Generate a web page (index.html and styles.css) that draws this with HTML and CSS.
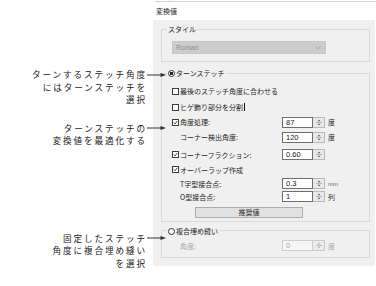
FILE: index.html
```html
<!DOCTYPE html>
<html lang="ja">
<head>
<meta charset="utf-8">
<title>変換値</title>
<link rel="stylesheet" href="styles.css">
</head>
<body>
<div class="page">
  <div class="notes">
    <div class="note">
      <p class="note-text">ターンするステッチ角度<br>にはターンステッチを<br>選択</p>
      <svg class="arrow" viewBox="0 0 19 6"><line x1="0" y1="3" x2="15" y2="3"/><polygon points="13.5,1 19,3 13.5,5"/></svg>
    </div>
    <div class="note note-2">
      <p class="note-text">ターンステッチの<br>変換値を最適化する</p>
      <svg class="arrow" viewBox="0 0 19 6"><line x1="0" y1="3" x2="15" y2="3"/><polygon points="13.5,1 19,3 13.5,5"/></svg>
    </div>
    <div class="note note-3">
      <p class="note-text">固定したステッチ<br>角度に複合埋め縫い<br>を選択</p>
      <svg class="arrow" viewBox="0 0 19 6"><line x1="0" y1="3" x2="15" y2="3"/><polygon points="13.5,1 19,3 13.5,5"/></svg>
    </div>
  </div>

  <div class="dialog">
    <div class="dlg-head">変換値</div>
    <div class="panel">
      <fieldset class="group group-style">
        <legend>スタイル</legend>
        <div class="combo"><span>Roman</span><svg class="chev" viewBox="0 0 6 4"><polyline points="0.5,0.5 3,3 5.5,0.5"/></svg></div>
      </fieldset>

      <fieldset class="group group-turn">
        <legend><span class="radio on"></span>ターンステッチ</legend>
        <div class="row"><span class="check"></span>最後のステッチ角度に合わせる</div>
        <div class="row spaced-sm"><span class="check"></span>ヒゲ飾り部分を分割<span class="caret"></span></div>
        <div class="row">
          <span class="lbl"><span class="check on"><svg viewBox="0 0 5 5"><polyline points="0.8,2.4 2,3.8 4.3,0.9"/></svg></span>角度処理:</span>
          <span class="spin"><span class="spin-val">87</span><span class="spin-btn"><svg viewBox="0 0 8 9"><polygon points="2.5,3.3 4,1.8 5.5,3.3"/><line x1="1" y1="4.5" x2="7" y2="4.5"/><polygon points="2.5,5.7 4,7.2 5.5,5.7"/></svg></span></span>
          <span class="unit">度</span>
        </div>
        <div class="row">
          <span class="lbl indent">コーナー検出角度:</span>
          <span class="spin"><span class="spin-val">120</span><span class="spin-btn"><svg viewBox="0 0 8 9"><polygon points="2.5,3.3 4,1.8 5.5,3.3"/><line x1="1" y1="4.5" x2="7" y2="4.5"/><polygon points="2.5,5.7 4,7.2 5.5,5.7"/></svg></span></span>
          <span class="unit">度</span>
        </div>
        <div class="row spaced">
          <span class="lbl"><span class="check on"><svg viewBox="0 0 5 5"><polyline points="0.8,2.4 2,3.8 4.3,0.9"/></svg></span>コーナーフラクション:</span>
          <span class="spin"><span class="spin-val">0.60</span><span class="spin-btn"><svg viewBox="0 0 8 9"><polygon points="2.5,3.3 4,1.8 5.5,3.3"/><line x1="1" y1="4.5" x2="7" y2="4.5"/><polygon points="2.5,5.7 4,7.2 5.5,5.7"/></svg></span></span>
        </div>
        <div class="row"><span class="check on"><svg viewBox="0 0 5 5"><polyline points="0.8,2.4 2,3.8 4.3,0.9"/></svg></span>オーバーラップ作成</div>
        <div class="row tight">
          <span class="lbl indent">T字型接合点:</span>
          <span class="spin"><span class="spin-val">0.3</span><span class="spin-btn"><svg viewBox="0 0 8 9"><polygon points="2.5,3.3 4,1.8 5.5,3.3"/><line x1="1" y1="4.5" x2="7" y2="4.5"/><polygon points="2.5,5.7 4,7.2 5.5,5.7"/></svg></span></span>
          <span class="unit unit-mm">mm</span>
        </div>
        <div class="row tight">
          <span class="lbl indent">O型接合点:</span>
          <span class="spin"><span class="spin-val">1</span><span class="spin-btn"><svg viewBox="0 0 8 9"><polygon points="2.5,3.3 4,1.8 5.5,3.3"/><line x1="1" y1="4.5" x2="7" y2="4.5"/><polygon points="2.5,5.7 4,7.2 5.5,5.7"/></svg></span></span>
          <span class="unit">列</span>
        </div>
        <div class="btn">推奨値</div>
      </fieldset>

      <fieldset class="group group-fill">
        <legend><span class="radio"></span>複合埋め縫い</legend>
        <div class="row disabled">
          <span class="lbl indent">角度:</span>
          <span class="spin"><span class="spin-val">0</span><span class="spin-btn"><svg viewBox="0 0 8 9"><polygon points="2.5,3.3 4,1.8 5.5,3.3"/><line x1="1" y1="4.5" x2="7" y2="4.5"/><polygon points="2.5,5.7 4,7.2 5.5,5.7"/></svg></span></span>
          <span class="unit">度</span>
        </div>
      </fieldset>
    </div>
  </div>
</div>
</body>
</html>
```

FILE: styles.css
```css
* { box-sizing: border-box; }

html, body {
  margin: 0;
  padding: 0;
  background: #ffffff;
}

body {
  width: 376px;
  height: 286px;
  overflow: hidden;
  font-family: "Noto Sans CJK JP", "Noto Sans", sans-serif;
  color: #1e1e1e;
}

.page {
  display: flex;
  align-items: flex-start;
}

/* ---------- annotations ---------- */
.notes {
  width: 153px;
  flex: none;
  padding-top: 68px;
  position: relative;
  z-index: 1;
}

.note {
  display: flex;
  justify-content: flex-end;
  align-items: flex-start;
  margin-right: -13px;
}

.note-2 { margin-top: 16px; }
.note-3 { margin-top: 85px; }

.note-text {
  margin: 0;
  font-size: 8.6px;
  line-height: 12.5px;
  letter-spacing: 1.9px;
  text-align: right;
  white-space: nowrap;
  color: #222222;
}

.arrow {
  display: block;
  flex: none;
  width: 19px;
  height: 6px;
  margin: 3.5px 0 0 0;
}
.arrow line { stroke: #333333; stroke-width: 1; }
.arrow polygon { fill: #333333; }

/* ---------- dialog ---------- */
.dialog {
  width: 223px;
  flex: none;
}

.dlg-head {
  margin: 1px 0 0 2px;
  height: 19px;
  border-top: 1px solid #d2d2d2;
  padding-left: 1px;
  font-size: 7px;
  line-height: 18px;
  color: #222222;
}

.panel {
  height: 246px;
  margin-right: 1px;
  padding: 4px 5px 0 8px;
  background: #f0f0f0;
  font-size: 7px;
}

.group {
  margin: 0;
  min-width: 0;
  padding: 0 0 0 10px;
  border: 1px solid #dadada;
}

.group legend {
  height: 10px;
  margin-left: -5px;
  padding: 0 1px;
  font-size: 7px;
  line-height: 10px;
  white-space: nowrap;
}

.group-style { padding-top: 7px; padding-bottom: 7px; }
.group-turn { margin-top: 6px; padding-top: 5.5px; padding-bottom: 3px; }
.group-fill { margin-top: 3.5px; padding-top: 2.5px; padding-bottom: 4px; }

.combo {
  width: 154px;
  height: 13px;
  display: flex;
  align-items: center;
  justify-content: space-between;
  padding: 0 3px 0 3px;
  background: #cccccc;
  border: 1px solid #c6c6c6;
  color: #8c8c8c;
  font-family: "Liberation Sans", Arial, sans-serif;
  font-size: 7px;
}

.chev {
  width: 6px;
  height: 4px;
  margin-right: 1px;
}
.chev polyline { fill: none; stroke: #a6a6a6; stroke-width: 0.8; }

.radio {
  display: inline-block;
  width: 7px;
  height: 7px;
  margin-right: 1px;
  vertical-align: -1px;
  border: 1px solid #333333;
  border-radius: 50%;
  background: #ffffff;
}
.radio.on {
  background: radial-gradient(circle, #222222 0 1.5px, #ffffff 2px);
}

.row {
  display: flex;
  align-items: center;
  height: 15px;
  white-space: nowrap;
}
.row.tight { height: 13px; }
.row.spaced-sm { margin-top: 1px; }
.row.spaced { margin-top: 2.5px; }

.check {
  flex: none;
  display: inline-flex;
  width: 7px;
  height: 7px;
  margin-right: 1px;
  border: 1px solid #3c3c3c;
  background: #ffffff;
}
.check svg { width: 5px; height: 5px; display: block; }
.check polyline { fill: none; stroke: #2a2a2a; stroke-width: 0.9; }

.caret {
  display: inline-block;
  width: 1.5px;
  height: 8px;
  margin-left: 0.5px;
  background: #111111;
}

.lbl {
  display: flex;
  align-items: center;
  width: 110px;
  flex: none;
}
.lbl.indent { padding-left: 8px; }

.spin {
  display: flex;
  height: 11px;
  flex: none;
}

.spin-val {
  width: 31px;
  height: 11px;
  padding-left: 3px;
  border: 1px solid #6e6e6e;
  background: #ffffff;
  font-family: "Liberation Sans", Arial, sans-serif;
  font-size: 7.5px;
  line-height: 9px;
  color: #1a1a1a;
}

.spin-btn {
  width: 12px;
  height: 11px;
  display: flex;
  align-items: center;
  justify-content: center;
  border: 1px solid #b9b9b9;
  border-left: none;
  background: #e9e9e9;
}
.spin-btn svg { width: 8px; height: 9px; display: block; }
.spin-btn polygon { fill: #555555; }
.spin-btn line { stroke: #9a9a9a; stroke-width: 0.6; }

.unit {
  margin-left: 3px;
}
.unit-mm {
  font-family: "Liberation Sans", Arial, sans-serif;
  font-size: 6px;
  color: #666666;
}

.btn {
  width: 108px;
  height: 11.5px;
  margin: 3.5px 0 0 23px;
  border: 1px solid #adadad;
  background: #e1e1e1;
  text-align: center;
  font-size: 7px;
  line-height: 9.5px;
}

.row.disabled { color: #a8a8a8; }
.row.disabled .spin-val {
  border-color: #cdcdcd;
  background: #f6f6f6;
  color: #a8a8a8;
}
.row.disabled .spin-btn {
  border-color: #c9c9c9;
  background: #ececec;
}
.row.disabled .spin-btn polygon { fill: #b0b0b0; }
```
